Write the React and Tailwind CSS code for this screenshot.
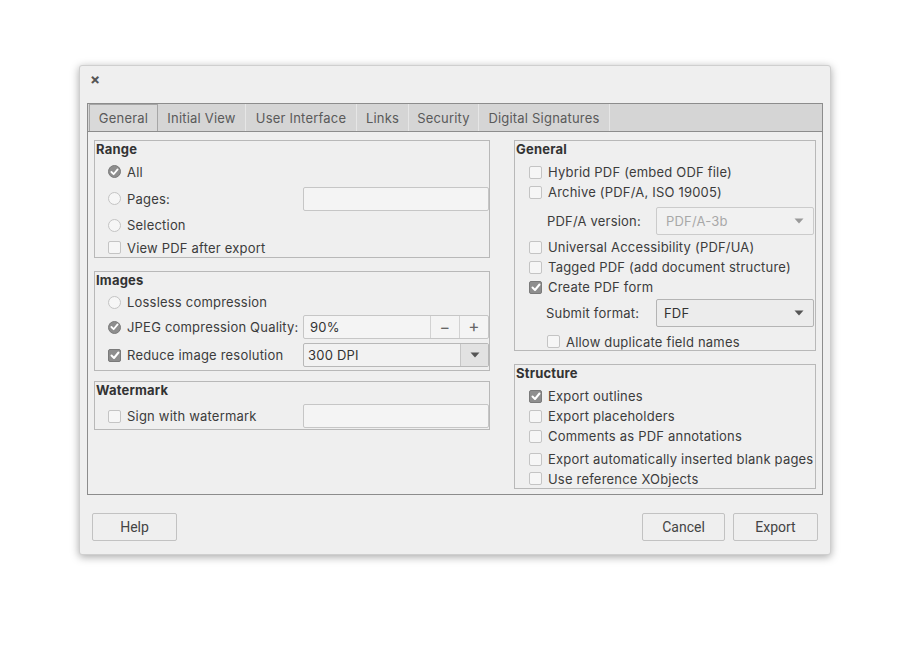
import React from 'react';

const font = { fontFamily: 'Inter, "Noto Sans", sans-serif' };

function Check({ checked }) {
  if (checked) {
    return (
      <span className="w-[13px] h-[13px] shrink-0 rounded-[2px] bg-[#8e8e8e] border border-[#7a7a7a] flex items-center justify-center">
        <svg width="10" height="9" viewBox="0 0 10 9">
          <path d="M1.5 4.5 L4 7 L8.5 1.5" stroke="#fff" strokeWidth="2" fill="none" strokeLinecap="round" strokeLinejoin="round" />
        </svg>
      </span>
    );
  }
  return <span className="w-[13px] h-[13px] shrink-0 rounded-[2px] bg-[#f6f6f6] border border-[#c4c4c4]" />;
}

function Radio({ checked }) {
  if (checked) {
    return (
      <span className="w-[13px] h-[13px] shrink-0 rounded-full bg-[#8e8e8e] border border-[#7a7a7a] flex items-center justify-center">
        <svg width="9" height="8" viewBox="0 0 10 9">
          <path d="M1.5 4.5 L4 7 L8.5 1.5" stroke="#fff" strokeWidth="2" fill="none" strokeLinecap="round" strokeLinejoin="round" />
        </svg>
      </span>
    );
  }
  return <span className="w-[13px] h-[13px] shrink-0 rounded-full bg-[#f6f6f6] border border-[#c4c4c4]" />;
}

function Arrow({ color = '#555' }) {
  return (
    <svg width="10" height="6" viewBox="0 0 10 6">
      <path d="M0.5 0.5 H9.5 L5 5.5 Z" fill={color} />
    </svg>
  );
}

// text nudged down a pixel so it sits level with the indicator boxes
function Label({ children, grow }) {
  return <span className={`pt-[2px] whitespace-nowrap ${grow ? 'flex-1 min-w-0' : ''}`}>{children}</span>;
}

function Group({ title, className, children }) {
  return (
    <div className={`border border-[#b8b8b8] flex flex-col ${className}`}>
      <div className="h-[18px] flex items-center pl-[1px] text-[13px] font-bold text-[#333]">{title}</div>
      {children}
    </div>
  );
}

function Field() {
  return <div className="w-[186px] h-[24px] shrink-0 border border-[#c6c6c6] rounded-[2px] bg-[#f4f4f4]" />;
}

const tabs = [
  ['General', 'w-[69px]'],
  ['Initial View', 'w-[88px]'],
  ['User Interface', 'w-[111px]'],
  ['Links', 'w-[52px]'],
  ['Security', 'w-[70px]'],
  ['Digital Signatures', 'w-[131px]'],
];

export default function App() {
  return (
    <div className="w-[910px] h-[648px] bg-white pt-[65px] pl-[79px] text-[13px] tracking-[0.2px] text-[#3c3c3c]" style={font}>
      <div className="w-[752px] h-[490px] bg-[#efefef] border border-[#cfcfcf] rounded-[3px] shadow-[0_2px_8px_rgba(0,0,0,0.35)] flex flex-col">
        {/* title bar */}
        <div className="h-[37px] pl-[10px] pt-[6px] text-[#555] text-[15px] leading-none">
          <span className="font-bold">×</span>
        </div>

        {/* tab widget */}
        <div className="ml-[7px] w-[736px] h-[392px] border border-[#8c8c8c] flex flex-col">
          <div className="h-[28px] bg-[#d5d5d5] border-b border-[#8c8c8c] flex pl-[1px]">
            {tabs.map(([t, w], i) => (
              <div
                key={t}
                className={`${w} h-full flex items-center justify-center pt-[2px] text-[#5a5a5a] ${i === 0 ? 'bg-[#d9d9d9] border border-[#a6a6a6] border-b-0' : 'border-r border-[#e6e6e6]'}`}
              >
                {t}
              </div>
            ))}
          </div>

          <div className="flex pt-[8px] pl-[6px] gap-[24px]">
            {/* left column */}
            <div className="w-[396px] flex flex-col">
              <Group title="Range" className="h-[118px]">
                <div className="h-[26px] flex items-center pl-[13px] gap-[6px]"><Radio checked /><Label>All</Label></div>
                <div className="h-[28px] flex items-center pl-[13px] gap-[6px]">
                  <Radio />
                  <Label grow>Pages:</Label>
                  <Field />
                </div>
                <div className="h-[26px] flex items-center pl-[13px] gap-[6px]"><Radio /><Label>Selection</Label></div>
                <div className="h-[19px] flex items-center pl-[13px] gap-[6px]"><Check /><Label>View PDF after export</Label></div>
              </Group>

              <Group title="Images" className="h-[100px] mt-[13px]">
                <div className="h-[24px] flex items-center pl-[13px] gap-[6px]"><Radio /><Label>Lossless compression</Label></div>
                <div className="h-[26px] flex items-center pl-[13px] gap-[6px]">
                  <Radio checked />
                  <Label grow>JPEG compression Quality:</Label>
                  <div className="w-[186px] h-[24px] shrink-0 border border-[#c6c6c6] rounded-[2px] bg-[#f4f4f4] flex items-center">
                    <span className="flex-1 pl-[6px] pt-[2px] text-[#333]">90%</span>
                    <span className="w-[29px] h-full border-l border-[#d2d2d2] flex items-center justify-center text-[#666] text-[16px]">−</span>
                    <span className="w-[29px] h-full border-l border-[#d2d2d2] flex items-center justify-center text-[#666] text-[17px]">+</span>
                  </div>
                </div>
                <div className="h-[26px] mt-[2px] flex items-center pl-[13px] gap-[6px]">
                  <Check checked />
                  <Label grow>Reduce image resolution</Label>
                  <div className="w-[186px] h-[24px] shrink-0 border border-[#b8b8b8] rounded-[2px] bg-[#f2f2f2] flex items-center">
                    <span className="flex-1 pl-[4px] pt-[2px] text-[#333]">300 DPI</span>
                    <span className="w-[28px] h-full border-l border-[#c6c6c6] bg-[#e2e2e2] flex items-center justify-center"><Arrow /></span>
                  </div>
                </div>
              </Group>

              <Group title="Watermark" className="h-[49px] mt-[10px]">
                <div className="h-[26px] mt-[3px] flex items-center pl-[13px] gap-[6px]">
                  <Check />
                  <Label grow>Sign with watermark</Label>
                  <Field />
                </div>
              </Group>
            </div>

            {/* right column */}
            <div className="w-[302px] flex flex-col">
              <Group title="General" className="h-[211px]">
                <div className="h-[20px] mt-[3px] flex items-center pl-[14px] gap-[6px]"><Check /><Label>Hybrid PDF (embed ODF file)</Label></div>
                <div className="h-[20px] flex items-center pl-[14px] gap-[6px]"><Check /><Label>Archive (PDF/A, ISO 19005)</Label></div>
                <div className="h-[28px] mt-[5px] flex items-center pl-[32px]">
                  <Label grow>PDF/A version:</Label>
                  <div className="w-[158px] h-[28px] shrink-0 mr-[1px] border border-[#cbcbcb] rounded-[2px] bg-[#f1f1f1] flex items-center">
                    <span className="flex-1 pl-[9px] pt-[2px] text-[#a8a8a8]">PDF/A-3b</span>
                    <span className="pr-[9px] flex items-center"><Arrow color="#9a9a9a" /></span>
                  </div>
                </div>
                <div className="h-[20px] mt-[2px] flex items-center pl-[14px] gap-[6px]"><Check /><Label>Universal Accessibility (PDF/UA)</Label></div>
                <div className="h-[20px] flex items-center pl-[14px] gap-[6px]"><Check /><Label>Tagged PDF (add document structure)</Label></div>
                <div className="h-[20px] flex items-center pl-[14px] gap-[6px]"><Check checked /><Label>Create PDF form</Label></div>
                <div className="h-[28px] mt-[2px] flex items-center pl-[31px]">
                  <Label grow>Submit format:</Label>
                  <div className="w-[158px] h-[28px] shrink-0 mr-[1px] border border-[#b4b4b4] rounded-[2px] bg-[#ececec] flex items-center">
                    <span className="flex-1 pl-[7px] pt-[2px] text-[#333]">FDF</span>
                    <span className="pr-[9px] flex items-center"><Arrow /></span>
                  </div>
                </div>
                <div className="h-[17px] mt-[6px] flex items-center pl-[32px] gap-[6px]"><Check /><Label>Allow duplicate field names</Label></div>
              </Group>

              <Group title="Structure" className="h-[125px] mt-[13px]">
                <div className="h-[20px] mt-[3px] flex items-center pl-[14px] gap-[6px]"><Check checked /><Label>Export outlines</Label></div>
                <div className="h-[20px] flex items-center pl-[14px] gap-[6px]"><Check /><Label>Export placeholders</Label></div>
                <div className="h-[20px] flex items-center pl-[14px] gap-[6px]"><Check /><Label>Comments as PDF annotations</Label></div>
                <div className="h-[20px] mt-[3px] flex items-center pl-[14px] gap-[6px]"><Check /><Label>Export automatically inserted blank pages</Label></div>
                <div className="h-[19px] flex items-center pl-[14px] gap-[6px]"><Check /><Label>Use reference XObjects</Label></div>
              </Group>
            </div>
          </div>
        </div>

        {/* buttons */}
        <div className="flex items-center px-[12px] mt-[18px] tracking-normal" style={{ fontFamily: 'Roboto, sans-serif' }}>
          <button className="w-[85px] h-[28px] border border-[#c2c2c2] rounded-[2px] bg-[#efefef] text-[14px] text-[#444]">Help</button>
          <div className="flex-1" />
          <button className="w-[83px] h-[28px] border border-[#c2c2c2] rounded-[2px] bg-[#efefef] text-[14px] text-[#444]">Cancel</button>
          <button className="w-[85px] h-[28px] ml-[8px] border border-[#c2c2c2] rounded-[2px] bg-[#efefef] text-[14px] text-[#444]">Export</button>
        </div>
      </div>
    </div>
  );
}
